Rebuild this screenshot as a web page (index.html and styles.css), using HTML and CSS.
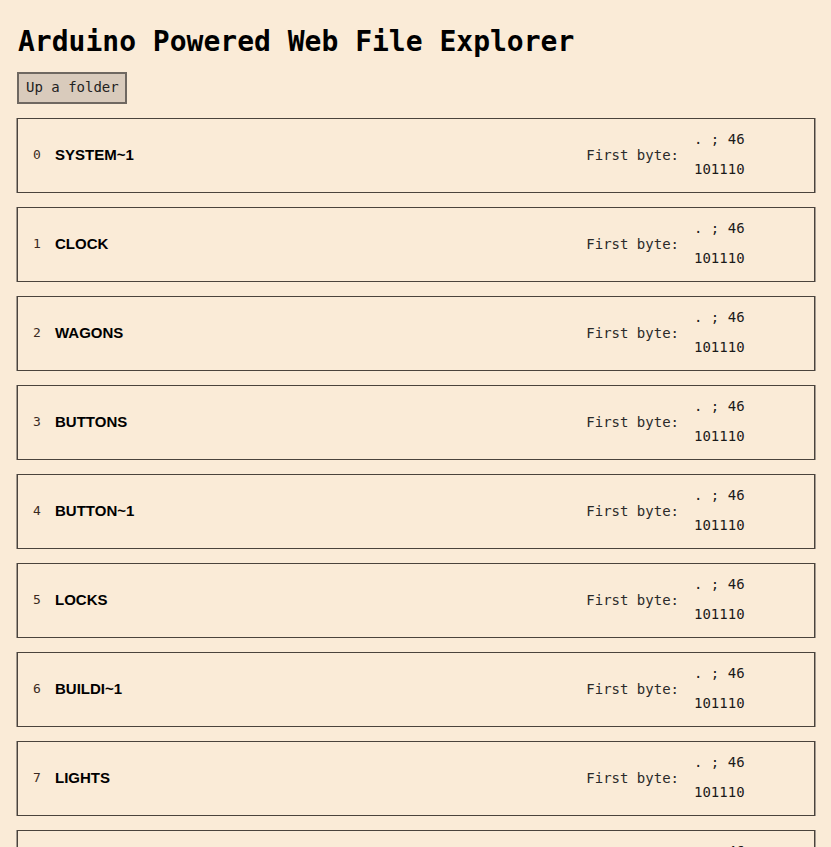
FILE: index.html
```html
<!DOCTYPE html>
<html>
<head>
<meta charset="utf-8">
<link rel="stylesheet" href="styles.css">
</head>
<body>
<h1 class="title">Arduino Powered Web File Explorer</h1>
<button class="up-btn">Up a folder</button>
<div class="list">
  <div class="entry"><span class="idx">0</span><span class="name">SYSTEM~1</span><span class="label">First byte:</span><div class="value"><span>. ; 46</span><span>101110</span></div></div>
  <div class="entry"><span class="idx">1</span><span class="name">CLOCK</span><span class="label">First byte:</span><div class="value"><span>. ; 46</span><span>101110</span></div></div>
  <div class="entry"><span class="idx">2</span><span class="name">WAGONS</span><span class="label">First byte:</span><div class="value"><span>. ; 46</span><span>101110</span></div></div>
  <div class="entry"><span class="idx">3</span><span class="name">BUTTONS</span><span class="label">First byte:</span><div class="value"><span>. ; 46</span><span>101110</span></div></div>
  <div class="entry"><span class="idx">4</span><span class="name">BUTTON~1</span><span class="label">First byte:</span><div class="value"><span>. ; 46</span><span>101110</span></div></div>
  <div class="entry"><span class="idx">5</span><span class="name">LOCKS</span><span class="label">First byte:</span><div class="value"><span>. ; 46</span><span>101110</span></div></div>
  <div class="entry"><span class="idx">6</span><span class="name">BUILDI~1</span><span class="label">First byte:</span><div class="value"><span>. ; 46</span><span>101110</span></div></div>
  <div class="entry"><span class="idx">7</span><span class="name">LIGHTS</span><span class="label">First byte:</span><div class="value"><span>. ; 46</span><span>101110</span></div></div>
  <div class="entry"><span class="idx">8</span><span class="name">SOUNDS</span><span class="label">First byte:</span><div class="value"><span>. ; 46</span><span>101110</span></div></div>
</div>
</body>
</html>
```

FILE: styles.css
```css
html, body {
  margin: 0;
  background: #faebd7;
}
body {
  padding: 25px 16px 0 17px;
  font-family: "DejaVu Sans Mono", "Liberation Mono", monospace;
  color: #1e1e1e;
  overflow: hidden;
  height: 847px;
  box-sizing: border-box;
}
.title {
  margin: 0 0 0 1px;
  font-size: 28px;
  line-height: 34px;
  font-weight: bold;
  color: #000;
}
.up-btn {
  margin-top: 13px;
  font-family: "DejaVu Sans Mono", "Liberation Mono", monospace;
  font-size: 14px;
  line-height: 16px;
  padding: 5px 6px 7px 7px;
  background: #d9cbbc;
  border: 2px solid #6f6861;
  color: #222;
  border-radius: 0;
}
.list {
  margin-top: 14px;
  display: flex;
  flex-direction: column;
  gap: 14px;
}
.entry {
  display: flex;
  align-items: center;
  height: 75px;
  box-sizing: border-box;
  border: 1px solid #4a433c;
  box-shadow: -1px 0 0 #a39a90, 1px 0 0 #a39a90;
  padding: 0 0 2px 15px;
  font-size: 14px;
  flex-shrink: 0;
}
.idx {
  font-size: 13px;
  color: #3a2a22;
  width: 22px;
}
.name {
  flex: 1;
  font-family: "Liberation Sans", Arial, sans-serif;
  font-weight: bold;
  font-size: 15px;
  color: #000;
}
.label {
  color: #2a2a2a;
}
.value {
  display: flex;
  flex-direction: column;
  line-height: 30px;
  margin-left: 15px;
  padding-bottom: 2px;
  width: 120px;
  color: #1a1a1a;
}
```
